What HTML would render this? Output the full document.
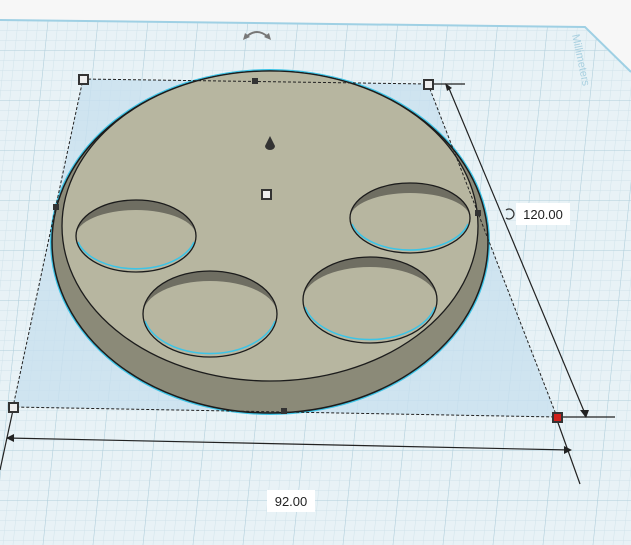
<!DOCTYPE html>
<html><head><style>html,body{margin:0;padding:0;background:#f7f7f7;overflow:hidden}svg{display:block}</style></head>
<body>
<svg width="631" height="545" viewBox="0 0 631 545" xmlns="http://www.w3.org/2000/svg">
<defs>
<pattern id="g" width="10" height="10" patternUnits="userSpaceOnUse" patternTransform="skewX(-6)">
<path d="M10 0H0V10" fill="none" stroke="#cfe2ea" stroke-width="0.9"/>
</pattern>
<pattern id="G" width="50" height="50" patternUnits="userSpaceOnUse" patternTransform="skewX(-6)">
<path d="M50 0H0V50" fill="none" stroke="#afcedb" stroke-width="1"/>
</pattern>
</defs>
<rect width="631" height="545" fill="#f7f7f7"/>
<polygon points="0,20 585,27 631,70 631,545 0,545" fill="#e8f2f6"/>
<polygon points="0,20 585,27 631,70 631,545 0,545" fill="url(#g)"/>
<polygon points="0,20 585,27 631,70 631,545 0,545" fill="url(#G)"/>
<polyline points="0,20 585,27 631,72" fill="none" stroke="#9fd0e4" stroke-width="2"/>
<text x="572" y="35" transform="rotate(78 572 35)" font-family="Liberation Sans, sans-serif" font-size="11" fill="#a9d0e0">Millimeters</text>
<polygon points="83,79 428,84 557,417 13,407" fill="#c8e0ef" opacity="0.8"/>
<ellipse cx="270" cy="242" rx="220" ry="173" fill="#3ec4e6"/>
<ellipse cx="270" cy="242" rx="218" ry="171" fill="#8b8a78" stroke="#1c1c1c" stroke-width="1.5"/>
<ellipse cx="270" cy="226" rx="208" ry="155" fill="#b7b6a0" stroke="#1c1c1c" stroke-width="1.3"/>
<g stroke-width="1.3">
<path d="M76,236 A60,36 0 0 1 196,236 A60,26 0 0 0 76,236Z" fill="#6f6e62"/>
<path d="M78,242 A60,36 0 0 0 194,242" fill="none" stroke="#3ec4e6" stroke-width="1.6"/>
<ellipse cx="136" cy="236" rx="60" ry="36" fill="none" stroke="#1c1c1c"/>
<path d="M143,314 A67,43 0 0 1 277,314 A67,33 0 0 0 143,314Z" fill="#6f6e62"/>
<path d="M145,321 A67,43 0 0 0 275,321" fill="none" stroke="#3ec4e6" stroke-width="1.6"/>
<ellipse cx="210" cy="314" rx="67" ry="43" fill="none" stroke="#1c1c1c"/>
<path d="M350,218 A60,35 0 0 1 470,218 A60,25 0 0 0 350,218Z" fill="#6f6e62"/>
<path d="M352,224 A60,35 0 0 0 468,224" fill="none" stroke="#3ec4e6" stroke-width="1.6"/>
<ellipse cx="410" cy="218" rx="60" ry="35" fill="none" stroke="#1c1c1c"/>
<path d="M303,300 A67,43 0 0 1 437,300 A67,33 0 0 0 303,300Z" fill="#6f6e62"/>
<path d="M305,307 A67,43 0 0 0 435,307" fill="none" stroke="#3ec4e6" stroke-width="1.6"/>
<ellipse cx="370" cy="300" rx="67" ry="43" fill="none" stroke="#1c1c1c"/>
</g>
<g stroke="#222" stroke-width="1" stroke-dasharray="3,2" fill="none">
<polyline points="83,79 428,84 557,417 13,407 83,79"/>
</g>
<g stroke="#222" stroke-width="1.2" fill="none">
<line x1="432" y1="84" x2="465" y2="84"/>
<line x1="560" y1="417" x2="615" y2="417"/>
<line x1="448" y1="86" x2="586" y2="416"/>
<line x1="7" y1="438" x2="570" y2="450"/>
<line x1="13" y1="410" x2="0" y2="470"/>
<line x1="557" y1="420" x2="580" y2="484"/>
</g>
<polygon points="445,83 452,88 447,91" fill="#222"/>
<polygon points="586,418 580,410 589,410" fill="#222"/>
<polygon points="6,438 14,434 14,442" fill="#222"/>
<polygon points="572,450 564,446 564,454" fill="#222"/>
<g stroke="#333" stroke-width="2" fill="#eee">
<rect x="79" y="75" width="9" height="9"/>
<rect x="424" y="80" width="9" height="9"/>
<rect x="9" y="403" width="9" height="9"/>
<rect x="262" y="190" width="9" height="9"/>
<rect x="553" y="413" width="9" height="9" fill="#d0201c"/>
</g>
<g fill="#333">
<rect x="252" y="78" width="6" height="6"/>
<rect x="281" y="408" width="6" height="6"/>
<rect x="53" y="204" width="6" height="6"/>
<rect x="475" y="210" width="6" height="6"/>
</g>
<path d="M270,136 L265,146 A5,4 0 0 0 275,146Z" fill="#333"/>
<path d="M246,37 Q257,27 268,37" fill="none" stroke="#777" stroke-width="2"/>
<polygon points="243,40 245,33 250,37" fill="#777"/>
<polygon points="271,40 269,33 264,37" fill="#777"/>
<path d="M506,210 A5,5 0 1 1 506,218" fill="none" stroke="#333" stroke-width="1.3"/>
<rect x="516" y="203" width="54" height="22" fill="#fff"/>
<text x="543" y="219" text-anchor="middle" font-family="Liberation Sans, sans-serif" font-size="13" fill="#222">120.00</text>
<rect x="267" y="490" width="48" height="22" fill="#fff"/>
<text x="291" y="506" text-anchor="middle" font-family="Liberation Sans, sans-serif" font-size="13" fill="#222">92.00</text>
</svg>
</body></html>
